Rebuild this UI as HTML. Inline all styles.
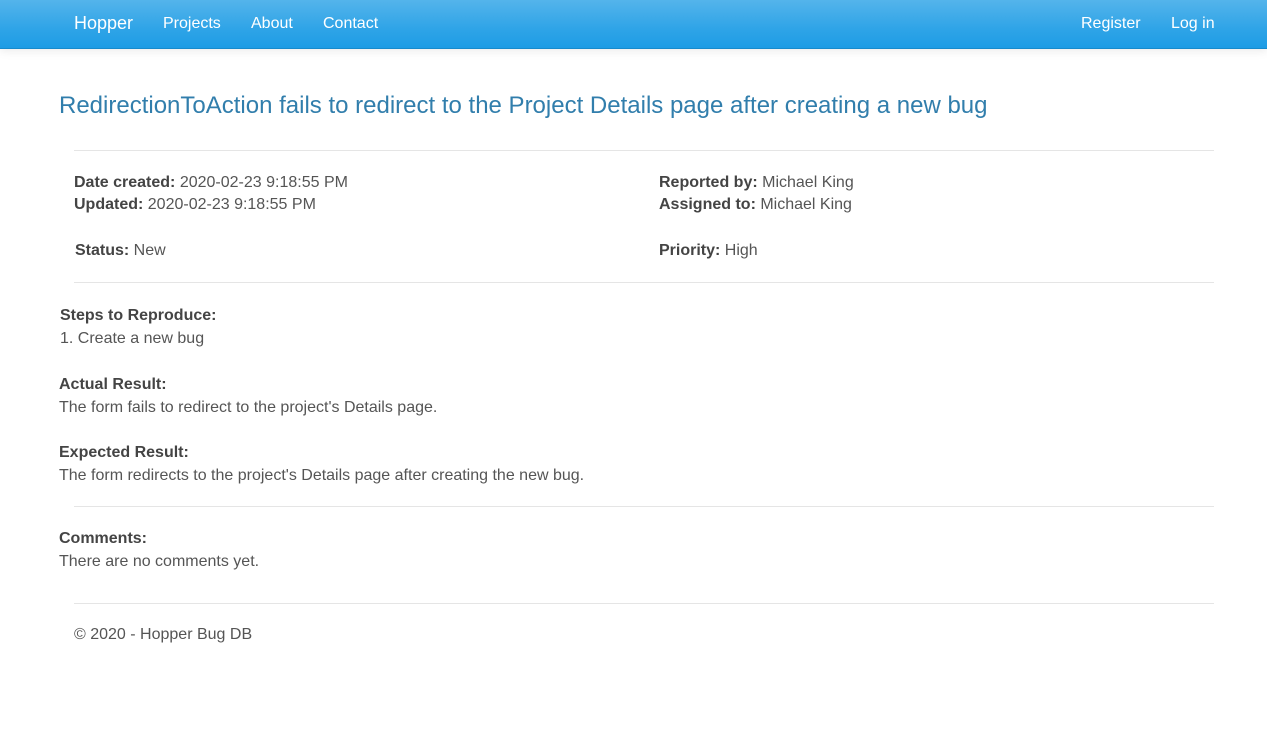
<!DOCTYPE html>
<html><head><style>
body{margin:0;font-family:"Liberation Sans",sans-serif;font-size:16px;color:#555;line-height:22px;background:#fff}
.nav{height:48px;background:linear-gradient(#54b4eb,#2fa4e7 60%,#1d9ce5);border-bottom:1px solid #178acc;box-shadow:0 1px 10px rgba(0,0,0,.1);position:relative;color:#fff}
.nav a{position:absolute;top:13px;color:#fff;font-size:16px}
h1{position:absolute;left:59px;top:92px;margin:0;font-size:24px;font-weight:normal;color:#317eac;line-height:28px;white-space:nowrap}
.a{position:absolute;white-space:nowrap}
hr{position:absolute;left:74px;width:1140px;margin:0;border:0;border-top:1px solid #e5e5e5}
b{color:#444;}
</style></head><body>
<div class="nav">
<a style="left:74px;font-size:18px;top:12px">Hopper</a>
<a style="left:163px">Projects</a>
<a style="left:251px">About</a>
<a style="left:323px">Contact</a>
<a style="left:1081px">Register</a>
<a style="left:1171px">Log in</a>
</div>
<h1>RedirectionToAction fails to redirect to the Project Details page after creating a new bug</h1>
<hr style="top:150px">
<div class="a" style="left:74px;top:172px"><b>Date created:</b> 2020-02-23 9:18:55 PM<br><b>Updated:</b> 2020-02-23 9:18:55 PM</div>
<div class="a" style="left:659px;top:172px"><b>Reported by:</b> Michael King<br><b>Assigned to:</b> Michael King</div>
<div class="a" style="left:75px;top:240px"><b>Status:</b> New</div>
<div class="a" style="left:659px;top:240px"><b>Priority:</b> High</div>
<hr style="top:282px">
<div class="a" style="left:60px;top:304px;line-height:23px"><b>Steps to Reproduce:</b><br>1. Create a new bug</div>
<div class="a" style="left:59px;top:373px;line-height:23px"><b>Actual Result:</b><br>The form fails to redirect to the project's Details page.</div>
<div class="a" style="left:59px;top:441px;line-height:23px"><b>Expected Result:</b><br>The form redirects to the project's Details page after creating the new bug.</div>
<hr style="top:506px">
<div class="a" style="left:59px;top:527px;line-height:23px"><b>Comments:</b><br>There are no comments yet.</div>
<hr style="top:603px">
<div class="a" style="left:74px;top:624px">© 2020 - Hopper Bug DB</div>
</body></html>
